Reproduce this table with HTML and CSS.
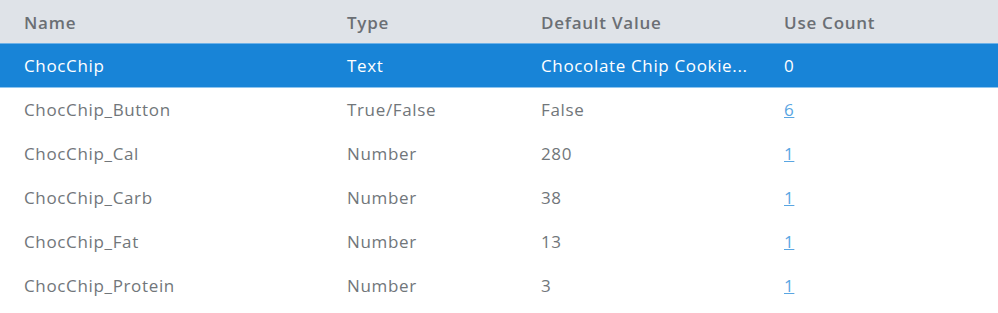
FILE: index.html
```html
<!DOCTYPE html>
<html>
<head>
<meta charset="utf-8">
<link rel="stylesheet" href="styles.css">
</head>
<body>
<table class="grid">
  <thead>
    <tr><th class="c1">Name</th><th class="c2">Type</th><th class="c3">Default Value</th><th class="c4">Use Count</th></tr>
  </thead>
  <tbody>
    <tr class="sel"><td>ChocChip</td><td>Text</td><td>Chocolate Chip Cookie...</td><td>0</td></tr>
    <tr><td>ChocChip_Button</td><td>True/False</td><td>False</td><td><a class="lnk">6</a></td></tr>
    <tr><td>ChocChip_Cal</td><td>Number</td><td>280</td><td><a class="lnk">1</a></td></tr>
    <tr><td>ChocChip_Carb</td><td>Number</td><td>38</td><td><a class="lnk">1</a></td></tr>
    <tr><td>ChocChip_Fat</td><td>Number</td><td>13</td><td><a class="lnk">1</a></td></tr>
    <tr><td>ChocChip_Protein</td><td>Number</td><td>3</td><td><a class="lnk">1</a></td></tr>
  </tbody>
</table>
</body>
</html>
```
FILE: styles.css
```css
html, body {
  margin: 0;
  padding: 0;
  background: #ffffff;
}
body {
  font-family: "Open Sans", "Noto Sans", sans-serif;
  font-size: 17px;
  letter-spacing: 0.65px;
  color: #71767a;
}
.grid {
  width: 998px;
  border-collapse: collapse;
  table-layout: fixed;
}
.grid th, .grid td {
  box-sizing: border-box;
  text-align: left;
  padding: 1px 0 0 24px;
  white-space: nowrap;
  overflow: hidden;
}
.grid th {
  height: 43px;
  padding-top: 2px;
  background: #dfe3e8;
  color: #6b6f74;
  font-weight: 600;
  letter-spacing: 0.75px;
}
.c1 { width: 323px; }
.c2 { width: 194px; }
.c3 { width: 243px; }
.grid td {
  height: 44px;
}
.grid tr.sel td {
  background: #1884d7;
  color: #ffffff;
  border-top: 1px solid #6fb2e8;
  border-bottom: 1px solid #8ec5ef;
  height: 44px;
}
.lnk {
  color: #5aa6e2;
  text-decoration: underline;
}
```
